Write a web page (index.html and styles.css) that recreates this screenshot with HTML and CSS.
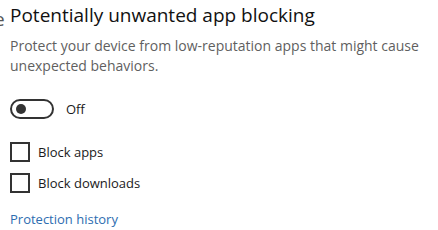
FILE: index.html
```
<!DOCTYPE html>
<html lang="en">
<head>
  <meta charset="UTF-8">
  <title>Potentially unwanted app blocking</title>
  <link rel="stylesheet" href="styles.css">
</head>
<body>
  <div class="panel">
    <span class="cut">e</span>
    <h2 class="title">Potentially unwanted app blocking</h2>
    <p class="desc">Protect your device from low-reputation apps that might cause unexpected behaviors.</p>
    <div class="toggle-row">
      <span class="toggle"><span class="knob"></span></span>
      <span class="toggle-label">Off</span>
    </div>
    <label class="check-row"><span class="box"></span>Block apps</label>
    <label class="check-row"><span class="box"></span>Block downloads</label>
    <a class="link" href="#">Protection history</a>
  </div>
</body>
</html>
```

FILE: styles.css
```
body {
  margin: 0;
  background: #fff;
  font-family: "Open Sans", sans-serif;
  color: #1a1a1a;
}
.panel {
  position: relative;
  padding: 0 10px;
  display: flex;
  flex-direction: column;
  align-items: flex-start;
}
.cut {
  position: absolute;
  left: -6px;
  top: 6px;
  font-size: 19px;
  color: #555;
}
.title {
  margin: 2px 0 0;
  font-size: 19px;
  font-weight: 400;
  line-height: 26px;
  color: #111;
}
.desc {
  margin: 8px 0 0;
  width: 425px;
  font-size: 14px;
  line-height: 20px;
  color: #5f5f5f;
}
.toggle-row {
  display: flex;
  align-items: center;
  margin-top: 23px;
}
.toggle {
  box-sizing: border-box;
  width: 44px;
  height: 20px;
  border: 2px solid #333;
  border-radius: 10px;
  display: flex;
  align-items: center;
  padding-left: 4px;
}
.knob {
  width: 10px;
  height: 10px;
  border-radius: 50%;
  background: #333;
}
.toggle-label {
  margin-left: 12px;
  font-size: 13px;
}
.check-row {
  display: flex;
  align-items: center;
  gap: 8px;
  font-size: 13px;
  margin-top: 11px;
}
.toggle-row + .check-row {
  margin-top: 23px;
}
.box {
  box-sizing: border-box;
  width: 20px;
  height: 20px;
  border: 2px solid #333;
}
.link {
  margin-top: 17px;
  font-size: 13px;
  color: #2d6db0;
  text-decoration: none;
}
```
